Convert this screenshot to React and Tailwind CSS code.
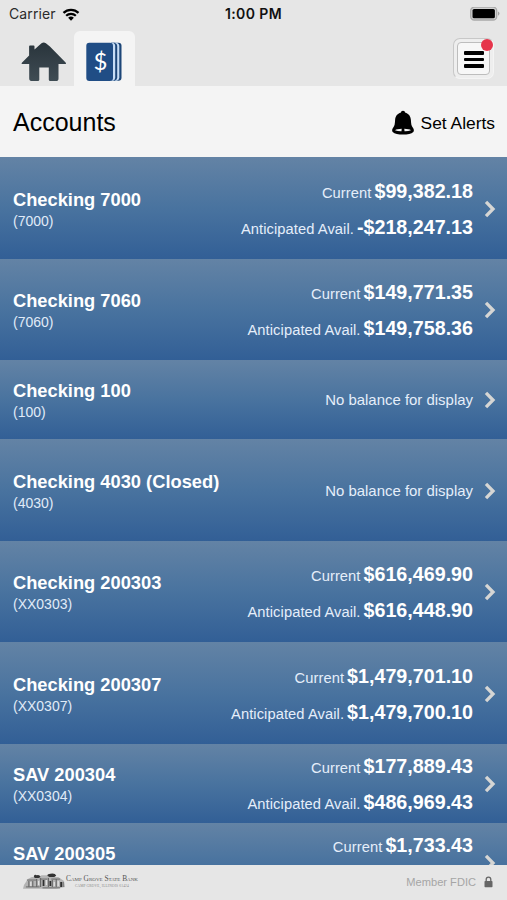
const accounts = [
  {
    name: "Checking 7000",
    number: "(7000)",
    current: "$99,382.18",
    available: "-$218,247.13",
    height: "h-[102px]",
  },
  {
    name: "Checking 7060",
    number: "(7060)",
    current: "$149,771.35",
    available: "$149,758.36",
    height: "h-[101px]",
  },
  { name: "Checking 100", number: "(100)", height: "h-[79px]" },
  { name: "Checking 4030 (Closed)", number: "(4030)", height: "h-[102px]" },
  {
    name: "Checking 200303",
    number: "(XX0303)",
    current: "$616,469.90",
    available: "$616,448.90",
    height: "h-[101px]",
  },
  {
    name: "Checking 200307",
    number: "(XX0307)",
    current: "$1,479,701.10",
    available: "$1,479,700.10",
    height: "h-[102px]",
  },
  {
    name: "SAV 200304",
    number: "(XX0304)",
    current: "$177,889.43",
    available: "$486,969.43",
    height: "h-[79px]",
  },
  { name: "SAV 200305", current: "$1,733.43", height: "h-[79px]" },
];

function StatusBar() {
  return (
    <div className="grid h-7 grid-cols-3 items-center pl-2 pr-[9px] font-['Inter',sans-serif] text-[14px] leading-none text-[#2b2b2b]">
      <div className="flex items-center gap-1.5 pl-px">
        <span className="tracking-[0.1px]">Carrier</span>
        <svg viewBox="0 0 18 14" className="h-[13px] w-[18px]" aria-hidden="true">
          <g fill="none" stroke="#000" strokeWidth="2.4">
            <path d="M0.9 5.3a11.6 11.6 0 0 1 16.2 0" />
            <path d="M3.8 8.3a7.5 7.5 0 0 1 10.4 0" />
          </g>
          <path d="M9 13.8 5.9 10.6a4.4 4.4 0 0 1 6.2 0z" fill="#000" />
        </svg>
      </div>
      <span className="pl-px text-center font-semibold tracking-[0.4px] text-[#111]">1:00 PM</span>
      <svg viewBox="0 0 30 14" className="-mr-[2px] h-[14px] w-[30px] justify-self-end" aria-hidden="true">
        <rect x="0.7" y="0.2" width="26" height="12.8" rx="3.6" fill="#d2d2d2" stroke="#a9a9a9" strokeWidth="1.3" />
        <rect x="2.5" y="1.9" width="22.4" height="9.4" rx="1.6" fill="#000" />
        <path d="M28 4.4a2.4 2.4 0 0 1 0 4.4z" fill="#a3a3a3" />
      </svg>
    </div>
  );
}

function HomeIcon() {
  return (
    <svg viewBox="0 0 46 40" className="h-10 w-[46px]" aria-hidden="true">
      <defs>
        <linearGradient id="home" x1="0" y1="0" x2="0" y2="1">
          <stop offset="0" stopColor="#29343b" />
          <stop offset="1" stopColor="#3f4c54" />
        </linearGradient>
      </defs>
      <path
        d="M20.5 1.2q2.2-1.6 4.4 0l4 3.400L44.600 20.500q1 1.500-.5 1.600H37.500V36.500q0 2.600-2.600 2.600H29.200q-1.400 0-1.400-1.400V25.500H18.300v12.200q0 1.400-1.400 1.400h-5.500Q8.200 39.100 8.200 36.500V22.100H1.500q-1.600-.1-.4-1.600l7-7.100V4.400q0-.9.9-.9h3.600q.9 0 .9.900v3z"
        fill="url(#home)"
      />
    </svg>
  );
}

function AccountsIcon() {
  return (
    <svg viewBox="0 0 37 40" className="h-10 w-[37px]" aria-hidden="true">
      <path d="M25 .8h7.5q3 0 3 3v31.900q0 3-3 3H25z" fill="#1d4678" />
      <path d="M25 .8h6q2.300 1 2.300 3v32q0 2-2.300 3H25z" fill="#c7ddf5" />
      <path d="M25 .8h3.600q2.600 1 2.600 3v31.900q0 2-2.600 3H25z" fill="#1d4678" />
      <path d="M25 .8h2.200q2 1 2 3v31.900q0 2-2 3H25z" fill="#c7ddf5" />
      <rect x="0.3" y="0.7" width="26.7" height="38.2" rx="3" fill="#204d85" />
      <text x="14.4" y="28.2" textAnchor="middle" fontSize="24" fill="#fff" className="font-['Lato',sans-serif]">
        $
      </text>
    </svg>
  );
}

function BellIcon() {
  return (
    <svg viewBox="0 0 22 25" className="h-[25px] w-[22px]" aria-hidden="true">
      <path
        d="M9.2 1.6Q11 0 12.800 1.600L13 2.500C16.900 3.600 18.700 6.500 18.900 10c.2 4 .5 5.800 2 7.700 1.100 1.500 1.300 3 .4 4.300C19.500 23.800 15.500 24.600 11 24.600S2.500 23.800.7 22c-.9-1.300-.7-2.800.4-4.300 1.500-1.900 1.800-3.700 2-7.700.2-3.500 2-6.400 5.900-7.500z"
        fill="#000"
      />
      <path d="M3 20.3q1.800-1.500 6.700-1.500l-.2 2.500q-3.700.1-6.500-1zM19 20.300q-1.800-1.500-6.700-1.500l.2 2.500q3.700.1 6.500-1z" fill="#f4f4f4" />
    </svg>
  );
}

function Header() {
  return (
    <header className="h-[86px] shrink-0 bg-[#e6e6e6]">
      <StatusBar />
      <div className="flex h-[58px]">
        <div className="ml-[21px] mt-[14px] w-[53px]">
          <HomeIcon />
        </div>
        <div className="mt-[3px] flex w-[61px] justify-center rounded-t-[6px] bg-[#f4f4f4] pt-[11px]">
          <AccountsIcon />
        </div>
        <button
          aria-label="Menu"
          className="relative ml-auto mr-[13px] mt-[10px] h-[41px] w-[41px] rounded-[7px] border border-[#c8c8c8] border-b-[#f4f4f4] border-r-[#f4f4f4] bg-[#eeeeee] p-[3px]"
        >
          <span className="flex h-full w-full flex-col items-center justify-center gap-[3px] rounded-[4px] border border-[#bdbdbd] bg-[#f7f7f7] pt-0.5">
            <span className="h-[3.5px] w-5 rounded-[1px] bg-black" />
            <span className="h-[3.5px] w-5 rounded-[1px] bg-black" />
            <span className="h-[3.5px] w-5 rounded-[1px] bg-black" />
          </span>
          <span className="absolute right-0 top-0 h-3 w-3 rounded-full bg-[#e6344b]" />
        </button>
      </div>
    </header>
  );
}

function Balance({ label, value }) {
  return (
    <div className="flex h-9 items-baseline justify-end gap-[3px] leading-9">
      <span className="text-[14.7px] tracking-[0.08px] text-[#e5eefa]">{label}</span>
      <span className="text-[19.7px] font-bold">{value}</span>
    </div>
  );
}

function AccountRow({ account }) {
  return (
    <li
      className={`flex shrink-0 items-center bg-linear-to-b from-[#6383a5] via-[#49739f] to-[#325f96] pl-[13px] pr-[11px] text-white ${account.height}`}
    >
      <div className="pt-[3px]">
        <div className="text-[18.3px] font-bold leading-[22px]">{account.name}</div>
        <div className="h-5 text-[14px] leading-5 text-[#e0ebf8]">{account.number}</div>
      </div>
      <div className="ml-auto mr-[11px] pt-px text-right">
        {account.current ? (
          <>
            <Balance label="Current" value={account.current} />
            {account.available ? (
              <Balance label="Anticipated Avail." value={account.available} />
            ) : (
              <div className="h-9" />
            )}
          </>
        ) : (
          <div className="pt-px text-[14.95px] text-[#e5eefa]">No balance for display</div>
        )}
      </div>
      <svg viewBox="0 0 12 18" className="mt-px h-[18px] w-3" aria-hidden="true">
        <path d="M2 1.8 9 9l-7 7.2" fill="none" stroke="#d6d6d4" strokeWidth="3.3" />
      </svg>
    </li>
  );
}

function BankLogo() {
  return (
    <div className="flex items-start">
      <svg viewBox="0 0 44 18" className="h-[18px] w-[43px]" aria-hidden="true">
        <path d="M1 12 5 6l4-2h7l3-2h8l3 2h6l6 4 1 6-9 2H6l-6 0z" fill="#b4b4b4" />
        <path d="M11 3q1-2 3-1 3-1 4 2l-2 1h-4zM25 2.500q0-2 3-2 5-1 6 2l-2 1.500h-5z" fill="#333" />
        <path d="M4 7h10M17 6h8M29 6h9M3 14h14M20 15h18" stroke="#6a6a6a" strokeWidth="1" />
        <path d="M6 8v6M10 8v6M14 6v8M18 5v9M26 5v9M30 7v7M34 6v8M41 9v5" stroke="#6a6a6a" strokeWidth="1.2" />
        <path d="M8 9v4M16 8v4M24 7v5M32 9v4M36 8v5" stroke="#e2e2e2" strokeWidth="1.3" />
        <path d="M21 7v6M28 8v5M39 9v5" stroke="#2f2f2f" strokeWidth="1.8" />
      </svg>
      <div className="flex flex-col items-center whitespace-nowrap pt-px font-['Liberation_Serif',serif] text-[#555]">
        <span className="text-[7.4px] leading-[10px] [font-variant:small-caps]">Camp Grove State Bank</span>
        <span className="text-[3.5px] leading-[5px] tracking-[0.2px] text-[#888]">CAMP GROVE, ILLINOIS 61424</span>
      </div>
    </div>
  );
}

function Footer() {
  return (
    <footer className="flex h-[35px] shrink-0 justify-between bg-[#e6e6e6] pl-[23px] pr-[14px] pt-[8px]">
      <BankLogo />
      <div className="flex h-[18px] items-center gap-2 text-[#a5a5a5]">
        <span className="text-[11.1px]">Member FDIC</span>
        <svg viewBox="0 0 9 12" className="h-3 w-[9px]" aria-hidden="true">
          <path d="M2.2 6V3.500a2.300 2.300 0 0 1 4.600 0V6" fill="none" stroke="#666" strokeWidth="1.3" />
          <rect x="0.5" y="5" width="8" height="6.3" rx="0.8" fill="#666" />
        </svg>
      </div>
    </footer>
  );
}

export default function App() {
  return (
    <div className="flex h-[900px] w-full flex-col overflow-hidden bg-[#f4f4f4] font-['Liberation_Sans',Arial,sans-serif]">
      <Header />
      <div className="flex h-[71px] shrink-0 items-center justify-between pl-[13px] pr-3 pt-[3px] text-black">
        <h1 className="text-[25px]">Accounts</h1>
        <button className="flex items-center gap-[7px]">
          <BellIcon />
          <span className="text-[17.4px]">Set Alerts</span>
        </button>
      </div>
      <ul className="flex min-h-0 flex-1 flex-col overflow-hidden">
        {accounts.map((account) => (
          <AccountRow key={account.name} account={account} />
        ))}
      </ul>
      <Footer />
    </div>
  );
}
